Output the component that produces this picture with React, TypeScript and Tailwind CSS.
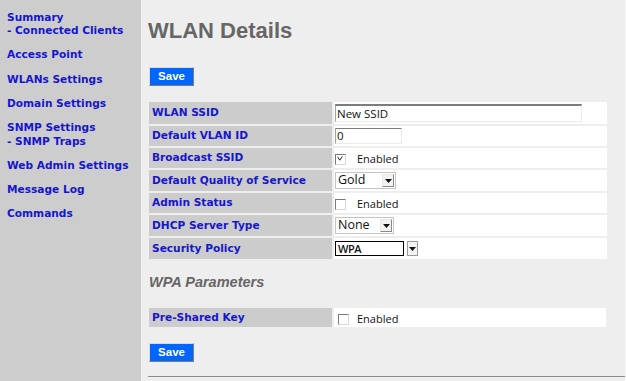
import React from "react";

const navFont = { fontFamily: '"DejaVu Sans", Verdana, sans-serif' };
const sansFont = { fontFamily: '"Liberation Sans", Arial, sans-serif' };
const uiFont = { fontFamily: '"Open Sans", "Lucida Grande", sans-serif' };

function NavItem({ lines }: { lines: string[] }) {
  return (
    <a href="#" className="block mb-[10.75px] text-[10.6px] leading-[13.5px] font-bold text-[#1616cc] no-underline" style={navFont}>
      {lines.map((l, i) => (
        <div key={i} className="whitespace-nowrap">{l}</div>
      ))}
    </a>
  );
}

function SaveButton() {
  return (
    <button
      className="w-[45px] h-[19px] bg-[#0066ff] text-white text-[11.5px] font-bold border border-t-[#dcdcdc] border-l-[#dcdcdc] border-b-[#7d7d7d] border-r-[#7d7d7d] leading-none flex items-center justify-center"
      style={sansFont}
    >
      Save
    </button>
  );
}

function Checkbox({ checked }: { checked?: boolean }) {
  return (
    <span className="relative inline-block w-[11px] h-[11px] bg-white border border-t-[#7a7a7a] border-l-[#7a7a7a] border-b-[#d8d8d8] border-r-[#d8d8d8] shrink-0">
      {checked && (
        <svg className="absolute left-[1px] top-[1px]" width="6" height="5" viewBox="0 0 6 5">
          <path d="M0.6 0.8 L2.8 4.2 L5.4 0.4" fill="none" stroke="#222" strokeWidth="1" />
        </svg>
      )}
    </span>
  );
}

function Arrow() {
  return (
    <svg width="7" height="4" viewBox="0 0 7 4">
      <path d="M0 0 H7 L3.5 4 Z" fill="#111" />
    </svg>
  );
}

function Select({ value, width }: { value: string; width: number }) {
  return (
    <div
      className="flex items-center h-[17px] bg-white border border-[#c4c4c4] pl-[2px] pr-[1px] justify-between"
      style={{ width }}
    >
      <span className="text-[12.5px] leading-none text-[#111]" style={uiFont}>{value}</span>
      <span className="w-[12px] h-[13px] border border-t-[#e8e8e8] border-l-[#e8e8e8] border-b-[#8a8a8a] border-r-[#8a8a8a] bg-[#f2f2f2] flex items-center justify-center">
        <Arrow />
      </span>
    </div>
  );
}

function Row({ label, h, children }: { label: string; h: number; children: React.ReactNode }) {
  return (
    <>
      <div
        className="bg-[#cccccc] flex items-center pl-[3px] text-[10.6px] font-bold text-[#1616cc] whitespace-nowrap"
        style={{ ...navFont, height: h }}
      >
        {label}
      </div>
      <div className="bg-white flex items-center pl-[1px]" style={{ height: h }}>
        {children}
      </div>
    </>
  );
}

function Enabled({ checked, offset }: { checked?: boolean; offset?: boolean }) {
  return (
    <div className={offset ? "flex items-end pl-[3px] pt-[2px]" : "flex items-end pt-[2px]"}>
      <Checkbox checked={checked} />
      <span
        className={offset ? "ml-[8px] text-[11px] leading-[12px] text-[#111]" : "ml-[11px] text-[11px] leading-[12px] text-[#111]"}
        style={uiFont}
      >
        Enabled
      </span>
    </div>
  );
}

export default function App() {
  return (
    <div className="flex w-[626px] h-[381px] overflow-hidden">
      <nav className="w-[141px] shrink-0 bg-[#cdcdcd] pl-[7px] pt-[10.5px]">
        <NavItem lines={["Summary", "- Connected Clients"]} />
        <NavItem lines={["Access Point"]} />
        <NavItem lines={["WLANs Settings"]} />
        <NavItem lines={["Domain Settings"]} />
        <NavItem lines={["SNMP Settings", "- SNMP Traps"]} />
        <NavItem lines={["Web Admin Settings"]} />
        <NavItem lines={["Message Log"]} />
        <NavItem lines={["Commands"]} />
      </nav>
      <main className="flex-1 bg-[#eeeeee] border-r border-[#fafafa] pl-[8px] pt-[19px]">
        <h1 className="text-[22px] leading-[24px] font-bold text-[#666666] ml-[-1px]" style={sansFont}>
          WLAN Details
        </h1>
        <div className="mt-[24px]">
          <SaveButton />
        </div>
        <div className="mt-[16px] grid grid-cols-[183px_273px] gap-[2px]">
          <Row label="WLAN SSID" h={22}>
            <div className="w-[247px] h-[18px] bg-white border border-t-[2px] border-t-[#7c7c7c] border-l-[#a0a0a0] border-b-[#ececec] border-r-[#ececec] flex items-center pl-[1px]">
              <span className="text-[11.5px] leading-none text-[#111]" style={uiFont}>New SSID</span>
            </div>
          </Row>
          <Row label="Default VLAN ID" h={20}>
            <div className="w-[67px] h-[16px] bg-white border border-t-[#7c7c7c] border-l-[#a0a0a0] border-b-[#ececec] border-r-[#ececec] flex items-center pl-[1px]">
              <span className="text-[11.5px] leading-none text-[#111]" style={uiFont}>0</span>
            </div>
          </Row>
          <Row label="Broadcast SSID" h={20}>
            <Enabled checked />
          </Row>
          <Row label="Default Quality of Service" h={21}>
            <Select value="Gold" width={61} />
          </Row>
          <Row label="Admin Status" h={20}>
            <Enabled />
          </Row>
          <Row label="DHCP Server Type" h={21}>
            <Select value="None" width={59} />
          </Row>
          <Row label="Security Policy" h={21}>
            <div className="flex items-center">
              <div className="w-[69px] h-[15px] bg-white border border-black flex items-center pl-[2px]">
                <span className="text-[11px] leading-none font-semibold text-[#111] tracking-[-0.4px]" style={uiFont}>WPA</span>
              </div>
              <span className="ml-[3px] w-[11px] h-[15px] border border-[#9a9a9a] bg-[#f4f4f4] flex items-center justify-center">
                <Arrow />
              </span>
            </div>
          </Row>
        </div>
        <h2 className="mt-[15px] text-[14.5px] leading-[17px] font-bold italic text-[#666666]" style={sansFont}>
          WPA Parameters
        </h2>
        <div className="mt-[17px] grid grid-cols-[183px_272px] gap-[2px]">
          <Row label="Pre-Shared Key" h={19}>
            <Enabled offset />
          </Row>
        </div>
        <div className="mt-[16px]">
          <SaveButton />
        </div>
        <div className="mt-[14px] h-[1px] bg-[#8a8a8a] ml-[-1px]" />
      </main>
    </div>
  );
}
